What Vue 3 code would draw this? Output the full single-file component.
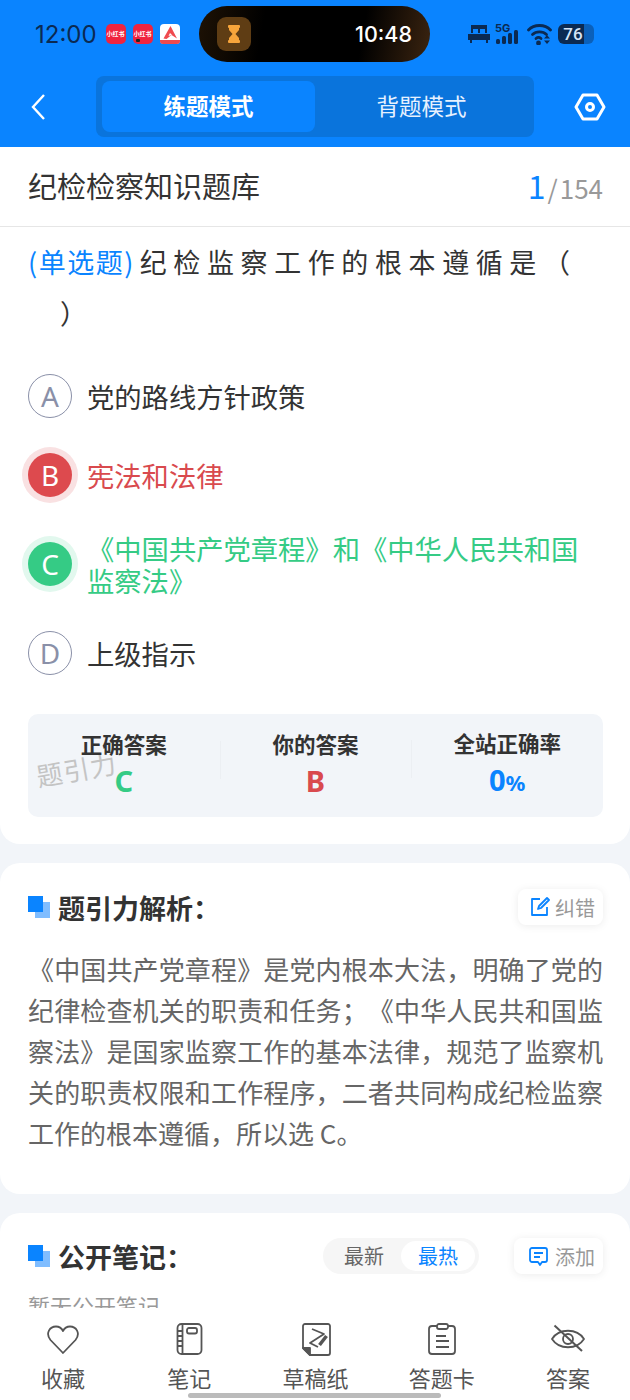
<template>
  <div class="page">
    <header class="top">
      <div class="status">
        <div class="status-left">
          <span class="clock">12:00</span>
          <span class="mini">小红书</span>
          <span class="mini mini-dot">小红书</span>
          <svg class="mini-a" viewBox="0 0 20 20">
            <rect width="20" height="20" rx="4" fill="#fff" />
            <path d="M10.500 2 L17 14.500 L11.500 11 L6.500 15 L3.500 14.500 Z" fill="#ef4a4f" />
            <path d="M10 9 L12 11 L8.500 12 Z" fill="#fff" />
            <path d="M0 16h20v1a3 3 0 0 1-3 3H3a3 3 0 0 1-3-3z" fill="#ef4a4f" />
          </svg>
        </div>
        <div class="island">
          <span class="island-tile">
            <svg viewBox="0 0 12 18" width="12" height="18" fill="#f7a53b">
              <rect width="12" height="3" rx="1" />
              <rect y="15" width="12" height="3" rx="1" />
              <path d="M1 3h10v2L7.500 9 11 13v2H1v-2l3.500-4L1 5z" />
            </svg>
          </span>
          <span class="island-time">10:48</span>
        </div>
        <div class="status-right">
          <svg width="22" height="18" viewBox="0 0 22 18" fill="#0b2a52">
            <path d="M3 0h16v8H3z" />
            <path d="M0 9h22v6h-2v3h-2v-3H4v3H2v-3H0z" />
            <rect x="5" y="4" width="5" height="4" fill="#0a84ff" />
            <rect x="12" y="4" width="5" height="4" fill="#0a84ff" />
          </svg>
          <span class="signal">
            <span class="five-g">5G</span>
            <svg width="24" height="14" viewBox="0 0 24 14" fill="#0b2a52">
              <rect x="1" y="9" width="4" height="5" rx="1.500" />
              <rect x="7" y="6" width="4" height="8" rx="1.500" />
              <rect x="13" y="3" width="4" height="11" rx="1.500" />
              <rect x="19" y="0" width="4" height="14" rx="1.500" />
            </svg>
          </span>
          <svg class="wifi" width="25" height="22" viewBox="0 0 25 22" fill="none" stroke="#0b2a52" stroke-width="2.800" stroke-linecap="round">
            <path d="M1.500 7c5.500-6 16.500-6 22 0" />
            <path d="M5.500 11.500c3.500-3.500 10.500-3.500 14 0" />
            <path d="M9 15.500c1.500-1.300 3.500-1.300 5 0" />
            <circle cx="11.500" cy="20" r="1" fill="#0b2a52" />
            <path d="M17 15.500h6l-3-3.500zM17 17.500h6l-3 3.500z" fill="#0b2a52" stroke="none" />
          </svg>
          <span class="battery"><span class="battery-num">76</span></span>
        </div>
      </div>
      <nav class="nav">
        <svg class="back" width="16" height="28" viewBox="0 0 16 28" fill="none" stroke="#fff" stroke-width="2.400">
          <path d="M14 2 L3 14 L14 26" />
        </svg>
        <div class="segment">
          <span class="seg-item seg-on">练题模式</span>
          <span class="seg-item">背题模式</span>
        </div>
        <svg class="gear" width="32" height="28" viewBox="0 0 32 28" fill="none" stroke="#fff" stroke-width="3">
          <path d="M9 2h14l7 12-7 12H9L2 14z" stroke-linejoin="round" />
          <circle cx="16" cy="14" r="3.500" />
        </svg>
      </nav>
    </header>

    <section class="card question-card">
      <div class="title-row">
        <span class="bank">纪检检察知识题库</span>
        <span class="count"><b>1</b><i>/</i>154</span>
      </div>
      <div class="question">
        <span class="q-type">(单选题)</span><span class="q-text">纪检监察工作的根本遵循是（</span>
        <div class="q-close">）</div>
      </div>
      <ul class="options">
        <li v-for="o in options" :key="o.key" class="option" :class="o.state">
          <span class="letter">{{ o.key }}</span>
          <span class="opt-text">{{ o.text }}</span>
        </li>
      </ul>
      <div class="answers">
        <span class="watermark">题引力</span>
        <div v-for="(a, i) in answers" :key="a.label" class="answer" :class="{ divided: i > 0 }">
          <span class="a-label">{{ a.label }}</span>
          <span class="a-value" :class="a.cls">{{ a.value }}<small v-if="a.unit">{{ a.unit }}</small></span>
        </div>
      </div>
    </section>

    <section class="card analysis-card">
      <div class="sec-head">
        <span class="sec-mark"></span>
        <h3 class="sec-title">题引力解析：</h3>
        <span class="chip">
          <svg width="20" height="20" viewBox="0 0 20 20" fill="none" stroke="#0a84ff" stroke-width="1.800">
            <path d="M10 2H2v16h15v-8" stroke-linejoin="round" />
            <path d="M8 12l1-3 8-8 2 2-8 8z" stroke-linejoin="round" />
          </svg>
          纠错
        </span>
      </div>
      <p class="analysis">《中国共产党章程》是党内根本大法，明确了党的纪律检查机关的职责和任务；《中华人民共和国监察法》是国家监察工作的基本法律，规范了监察机关的职责权限和工作程序，二者共同构成纪检监察工作的根本遵循，所以选 C。</p>
    </section>

    <section class="card notes-card">
      <div class="sec-head">
        <span class="sec-mark"></span>
        <h3 class="sec-title">公开笔记：</h3>
        <div class="sort">
          <span class="sort-item">最新</span>
          <span class="sort-item sort-on">最热</span>
        </div>
        <span class="chip chip-add">
          <svg width="21" height="21" viewBox="0 0 21 21" fill="none" stroke="#0a84ff" stroke-width="1.800">
            <path d="M4 2h13a2 2 0 0 1 2 2v10a2 2 0 0 1-2 2h-3l-2 3-2-3H4a2 2 0 0 1-2-2V4a2 2 0 0 1 2-2z" stroke-linejoin="round" />
            <path d="M6 7h9M6 11h6" />
          </svg>
          添加
        </span>
      </div>
      <p class="empty">暂无公开笔记</p>
    </section>

    <footer class="tabbar">
      <div class="tab">
        <svg width="34" height="34" viewBox="0 0 34 34" fill="none" stroke="#555" stroke-width="1.800" stroke-linejoin="round">
          <path d="M17 30 L4.500 17 C-1 10 4 3.500 10 3.500 C13 3.500 15.500 5 17 8 C18.500 5 21 3.500 24 3.500 C30 3.500 35 10 29.500 17 Z" />
        </svg>
        <span>收藏</span>
      </div>
      <div class="tab">
        <svg width="34" height="34" viewBox="0 0 34 34" fill="none" stroke="#555" stroke-width="1.800">
          <rect x="5.500" y="1" width="24" height="30" rx="4" />
          <path d="M10.500 1v30M5.500 8h5M5.500 13h5M5.500 18h5M5.500 23h5" />
          <rect x="15" y="5" width="10" height="5.500" rx="2" />
        </svg>
        <span>笔记</span>
      </div>
      <div class="tab">
        <svg width="34" height="34" viewBox="0 0 34 34" fill="none" stroke="#555" stroke-width="1.800" stroke-linejoin="round">
          <path d="M11 32H29a2 2 0 0 0 2-2V3a2 2 0 0 0-2-2H6a2 2 0 0 0-2 2v22z" />
          <path d="M4 25h7v7z" fill="#555" />
          <path d="M13 6l12 5-14 9 8 4" />
          <path d="M20.500 22l7-9" stroke-width="3.500" />
        </svg>
        <span>草稿纸</span>
      </div>
      <div class="tab">
        <svg width="34" height="34" viewBox="0 0 34 34" fill="none" stroke="#555" stroke-width="1.800">
          <path d="M12 3H7a3 3 0 0 0-3 3v22a3 3 0 0 0 3 3h20a3 3 0 0 0 3-3V6a3 3 0 0 0-3-3h-4" />
          <rect x="12" y="1" width="11" height="5" rx="2" />
          <path d="M11 13h10M11 18h13M11 24h13" />
        </svg>
        <span>答题卡</span>
      </div>
      <div class="tab">
        <svg width="34" height="34" viewBox="0 0 34 34" fill="none" stroke="#555" stroke-width="1.800">
          <path d="M1 16C8 5 26 5 33 16C26 27 8 27 1 16z" stroke-linejoin="round" />
          <circle cx="17" cy="16" r="5" />
          <path d="M3.500 2.500L31 28" stroke-width="2" />
        </svg>
        <span>答案</span>
      </div>
      <span class="home-bar"></span>
    </footer>
  </div>
</template>

<script setup>
const options = [
  { key: 'A', text: '党的路线方针政策', state: '' },
  { key: 'B', text: '宪法和法律', state: 'wrong' },
  { key: 'C', text: '《中国共产党章程》和《中华人民共和国监察法》', state: 'right' },
  { key: 'D', text: '上级指示', state: '' }
]

const answers = [
  { label: '正确答案', value: 'C', cls: 'green' },
  { label: '你的答案', value: 'B', cls: 'red' },
  { label: '全站正确率', value: '0', unit: '%', cls: 'blue' }
]
</script>

<style>
html, body {
  margin: 0;
  background: #f2f5f9;
}
</style>

<style scoped>
.page {
  position: relative;
  width: 630px;
  height: 1400px;
  overflow: hidden;
  background: #f2f5f9;
  font-family: "Noto Sans CJK SC", "Noto Sans", sans-serif;
  color: #333;
  text-spacing-trim: space-all;
}

/* header */
.top {
  height: 147px;
  background: #0a84ff;
  box-sizing: border-box;
  padding-top: 6px;
}
.status {
  display: flex;
  align-items: center;
  height: 56px;
  padding: 0 35px;
  color: #0b2a52;
}
.status-left {
  display: flex;
  align-items: center;
  width: 164px;
  gap: 7px;
}
.clock {
  font-family: "Inter", sans-serif;
  font-size: 24px;
  margin-right: 2px;
}
.mini {
  position: relative;
  width: 20px;
  height: 20px;
  border-radius: 5px;
  background: #f0243f;
  color: #fff;
  font-size: 6px;
  font-weight: 700;
  line-height: 20px;
  text-align: center;
  white-space: nowrap;
  overflow: hidden;
}
.mini-dot::after {
  content: "";
  position: absolute;
  left: 3px;
  bottom: 2px;
  width: 4px;
  height: 3px;
  border-radius: 1px;
  background: #222;
}
.mini-a {
  width: 20px;
  height: 20px;
}
.island {
  display: flex;
  align-items: center;
  justify-content: space-between;
  box-sizing: border-box;
  width: 231px;
  height: 56px;
  padding: 0 18px;
  border-radius: 28px;
  background: linear-gradient(100deg, #1e1205 0%, #000 28%, #000 70%, #3b2410 100%);
  flex-shrink: 0;
}
.island-tile {
  display: flex;
  align-items: center;
  justify-content: center;
  width: 34px;
  height: 34px;
  border-radius: 9px;
  background: #5f3d14;
}
.island-time {
  font-family: "Inter", sans-serif;
  font-size: 21.500px;
  font-weight: 500;
  color: #fff;
}
.status-right {
  display: flex;
  align-items: center;
  gap: 5px;
  margin-left: 38px;
  flex-shrink: 0;
}
.signal {
  position: relative;
  display: block;
  width: 25px;
  height: 20px;
  padding-top: 6px;
  box-sizing: border-box;
}
.signal svg {
  display: block;
}
.five-g {
  position: absolute;
  top: -1px;
  left: 0;
  font-family: "Inter", sans-serif;
  font-size: 11px;
  line-height: 10px;
  font-weight: 700;
}
.wifi {
  margin-left: 2px;
}
.battery {
  display: block;
  position: relative;
  width: 36px;
  height: 20px;
  margin-left: 1px;
  border-radius: 6px;
  background: linear-gradient(90deg, #0b2a52 72%, rgba(11, 42, 82, 0.4) 72%);
}
.battery-num {
  display: block;
  padding-right: 6px;
  text-align: center;
  font-family: "Roboto", sans-serif;
  font-size: 17px;
  font-weight: 500;
  line-height: 20px;
  color: #d5e4f7;
}
.nav {
  display: flex;
  align-items: center;
  margin-top: 14px;
  height: 61px;
  padding: 0 0 0 30px;
}
.back {
  flex-shrink: 0;
}
.segment {
  display: flex;
  box-sizing: border-box;
  width: 438px;
  height: 61px;
  margin-left: 50px;
  padding: 5px 6px;
  border-radius: 8px;
  background: #0a74dc;
  flex-shrink: 0;
}
.seg-item {
  flex: 1;
  display: flex;
  align-items: center;
  justify-content: center;
  box-sizing: border-box;
  padding-bottom: 3px;
  border-radius: 8px;
  font-size: 22.500px;
  color: #e6f1ff;
}
.seg-on {
  background: #0a84ff;
  color: #fff;
  font-weight: 700;
}
.gear {
  margin-left: 40px;
  flex-shrink: 0;
}

/* cards */
.card {
  background: #fff;
  border-radius: 20px;
  margin-bottom: 19px;
}
.question-card {
  height: 697px;
  border-radius: 0 0 20px 20px;
}
.title-row {
  display: flex;
  align-items: center;
  justify-content: space-between;
  height: 75px;
  padding: 0 27px 4px 28px;
  border-bottom: 1px solid #e6e6e6;
}
.bank {
  font-size: 29px;
  color: #333;
}
.count {
  font-size: 26px;
  color: #999;
}
.count b {
  font-size: 32px;
  font-weight: 400;
  color: #0a84ff;
}
.count i {
  font-style: normal;
  margin: 0 2px;
}
.question {
  padding: 9px 28px 0;
  font-size: 27px;
  line-height: 51px;
  letter-spacing: 6.600px;
  color: #333;
}
.q-type {
  color: #0a84ff;
  letter-spacing: 1.500px;
}
.q-text {
  margin-left: 5px;
}
.q-close {
  padding-left: 32px;
}
.options {
  list-style: none;
  margin: 36px 0 0;
  padding: 0 28px;
}
.option {
  display: flex;
  align-items: center;
  min-height: 44px;
  margin-bottom: 35px;
  font-size: 27.300px;
  line-height: 32px;
}
.letter {
  flex-shrink: 0;
  display: flex;
  align-items: center;
  justify-content: center;
  box-sizing: border-box;
  width: 44px;
  height: 44px;
  margin-right: 15px;
  border: 1.500px solid #8a90a8;
  border-radius: 50%;
  font-family: "Noto Sans", sans-serif;
  font-size: 28px;
  font-weight: 400;
  color: #8a90a8;
}
.opt-text {
  max-width: 495px;
  color: #333;
}
.wrong .letter {
  border: 0;
  background: #dd4a4e;
  color: #fff;
  box-shadow: 0 0 0 6px #f9e1e2;
}
.wrong .opt-text {
  color: #d94a4e;
}
.right .letter {
  border: 0;
  background: #35cb85;
  color: #fff;
  box-shadow: 0 0 0 6px #e2f8ee;
}
.right .opt-text {
  color: #35cb85;
}
.answers {
  position: relative;
  display: flex;
  align-items: center;
  height: 103px;
  box-sizing: border-box;
  padding-bottom: 2px;
  margin: 39px 27px 0 28px;
  border-radius: 10px;
  background: #f2f5f9;
}
.watermark {
  position: absolute;
  left: 8px;
  top: 36px;
  font-size: 26px;
  color: #c4c4c4;
  transform: rotate(-10deg);
  letter-spacing: 1px;
}
.answer {
  position: relative;
  flex: 1;
  display: flex;
  flex-direction: column;
  align-items: center;
  line-height: 1;
}
.divided::before {
  content: "";
  position: absolute;
  left: 0;
  top: 12px;
  height: 38px;
  border-left: 1px solid #eceff3;
}
.a-label {
  font-size: 21.500px;
  font-weight: 700;
  color: #333;
  line-height: 30px;
}
.a-value {
  margin-top: 2px;
  font-family: "Noto Sans", sans-serif;
  font-size: 29px;
  font-weight: 700;
  line-height: 40px;
}
.a-value small {
  font-size: 22px;
}
.green { color: #35cb85; }
.red { color: #d94a4e; }
.blue { color: #0a84ff; }

.analysis-card {
  height: 331px;
  box-sizing: border-box;
  padding: 25px 27px 0 28px;
}
.sec-head {
  display: flex;
  align-items: center;
  height: 38px;
}
.sec-mark {
  position: relative;
  display: block;
  width: 22px;
  height: 22px;
  margin-right: 8px;
  flex-shrink: 0;
}
.sec-mark::before,
.sec-mark::after {
  content: "";
  position: absolute;
  width: 15px;
  height: 16px;
}
.sec-mark::before {
  right: 0;
  bottom: 0;
  background: #80bdff;
}
.sec-mark::after {
  left: 0;
  top: 0;
  background: #0a84ff;
}
.sec-title {
  flex: 1;
  margin: 0;
  font-size: 27px;
  font-weight: 700;
  color: #333;
}
.chip {
  display: flex;
  align-items: center;
  gap: 5px;
  height: 36px;
  padding: 0 8px 0 12px;
  border-radius: 8px;
  background: #fff;
  box-shadow: 0 1px 8px rgba(0, 0, 0, 0.08);
  font-size: 20px;
  color: #999;
}
.chip-add {
  gap: 6px;
  padding-left: 14px;
}
.analysis {
  margin: 22px 0 0;
  font-size: 26px;
  line-height: 41px;
  color: #666;
  text-align: justify;
}
.notes-card {
  height: 300px;
  box-sizing: border-box;
  padding: 24px 27px 0 28px;
}
.sort {
  display: flex;
  align-items: center;
  height: 36px;
  margin-right: 35px;
  padding: 0 4px;
  border-radius: 18px;
  background: #f6f6f6;
}
.sort-item {
  padding: 0 17px;
  font-size: 20px;
  line-height: 30px;
  color: #666;
}
.sort-on {
  border-radius: 15px;
  background: #fff;
  color: #0a84ff;
}
.empty {
  margin: 14px 0 0;
  font-size: 22px;
  color: #999;
}

/* bottom tabs */
.tabbar {
  position: absolute;
  left: 0;
  right: 0;
  top: 1308px;
  height: 92px;
  display: flex;
  justify-content: space-between;
  box-sizing: border-box;
  padding: 15px 16px 0 17px;
  background: #fff;
}
.tab {
  display: flex;
  flex-direction: column;
  align-items: center;
  width: 92px;
  gap: 5px;
  font-size: 22px;
  line-height: 30px;
  color: #555;
}
.home-bar {
  position: absolute;
  left: 188px;
  bottom: 2px;
  width: 253px;
  height: 5px;
  border-radius: 3px;
  background: #bbb;
}
</style>
